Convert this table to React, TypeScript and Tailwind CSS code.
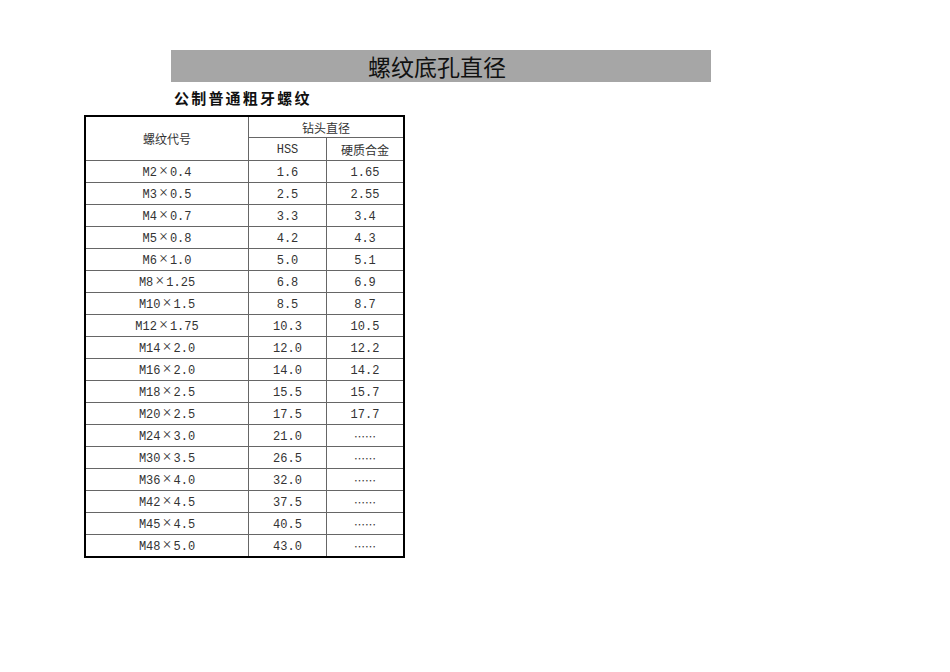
import React from "react";

const rows: [string, string, string][] = [
  ["M2×0.4", "1.6", "1.65"],
  ["M3×0.5", "2.5", "2.55"],
  ["M4×0.7", "3.3", "3.4"],
  ["M5×0.8", "4.2", "4.3"],
  ["M6×1.0", "5.0", "5.1"],
  ["M8×1.25", "6.8", "6.9"],
  ["M10×1.5", "8.5", "8.7"],
  ["M12×1.75", "10.3", "10.5"],
  ["M14×2.0", "12.0", "12.2"],
  ["M16×2.0", "14.0", "14.2"],
  ["M18×2.5", "15.5", "15.7"],
  ["M20×2.5", "17.5", "17.7"],
  ["M24×3.0", "21.0", "……"],
  ["M30×3.5", "26.5", "……"],
  ["M36×4.0", "32.0", "……"],
  ["M42×4.5", "37.5", "……"],
  ["M45×4.5", "40.5", "……"],
  ["M48×5.0", "43.0", "……"],
];

const mono = { fontFamily: '"Liberation Mono", "Noto Sans CJK SC", monospace' };

function Spec({ s }: { s: string }) {
  const [a, b] = s.split("×");
  return (
    <span style={mono}>
      {a}
      <span
        className="inline-block w-[13px] text-center text-[16px] leading-none"
        style={{ fontFamily: '"Liberation Serif", serif' }}
      >
        ×
      </span>
      {b}
    </span>
  );
}

export default function App() {
  return (
    <div className="w-[950px] h-[672px] bg-white pt-[50px]" style={{ fontFamily: '"Noto Sans CJK SC", sans-serif' }}>
      <div className="ml-[171px] w-[540px] h-[32px] bg-[#a6a6a6] flex items-center justify-center text-[23px] text-[#111] leading-none pt-[1px] pr-[8px]">
        螺纹底孔直径
      </div>
      <div className="ml-[174px] h-[33px] flex items-center text-[15px] font-bold tracking-[2.2px] text-[#111]">
        公制普通粗牙螺纹
      </div>
      <div className="ml-[84px] w-[321px] border-2 border-black text-[12px] text-[#333]">
        <div className="grid grid-cols-[163px_1fr]">
          <div className="h-[43px] border-r border-[#666] flex items-center justify-center pt-[1px]">螺纹代号</div>
          <div className="flex flex-col">
            <div className="h-[21px] border-b border-[#666] flex items-center justify-center pt-[1px]">钻头直径</div>
            <div className="h-[22px] grid grid-cols-[78px_1fr]">
              <div className="border-r border-[#666] flex items-center justify-center pt-[2px]" style={mono}>HSS</div>
              <div className="flex items-center justify-center pt-[1px]">硬质合金</div>
            </div>
          </div>
        </div>
        {rows.map((r) => (
          <div key={r[0]} className="grid grid-cols-[163px_78px_1fr] h-[22px] border-t border-[#666]">
            <div className="border-r border-[#666] flex items-center justify-center pt-[2px]"><Spec s={r[0]} /></div>
            <div className="border-r border-[#666] flex items-center justify-center pt-[2px]" style={mono}>{r[1]}</div>
            <div className="flex items-center justify-center pt-[2px]" style={r[2] === "……" ? { fontFamily: '"Noto Sans CJK SC", sans-serif', fontSize: "11px" } : mono}>{r[2]}</div>
          </div>
        ))}
      </div>
    </div>
  );
}
